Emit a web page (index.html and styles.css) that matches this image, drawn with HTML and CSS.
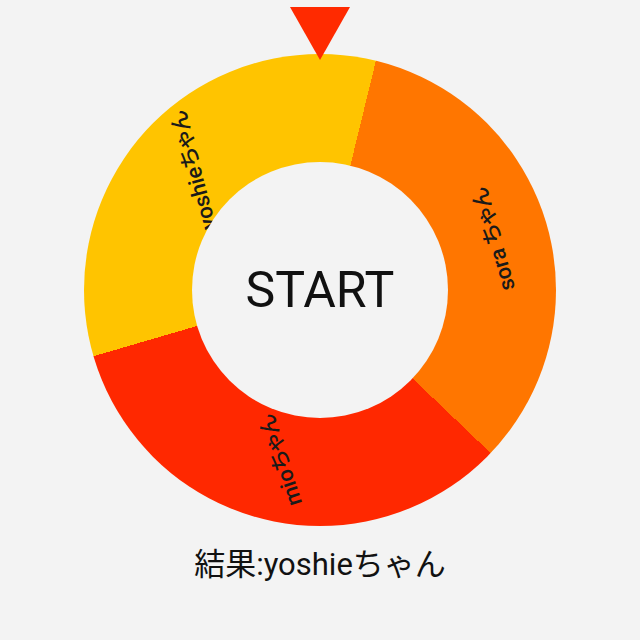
FILE: index.html
```html
<!DOCTYPE html>
<html lang="ja">
<head>
<meta charset="utf-8">
<title>Roulette</title>
<link rel="stylesheet" href="styles.css">
</head>
<body>
<main class="app">
  <div class="stage">
    <div class="pointer"></div>
    <div class="wheel">
      <span class="label label-yoshie">yoshieちゃん</span>
      <span class="label label-sora">sora ちゃん</span>
      <span class="label label-mio">mioちゃん</span>
      <button class="start" type="button">START</button>
    </div>
  </div>
  <p class="result">結果:yoshieちゃん</p>
</main>
</body>
</html>
```
FILE: styles.css
```css
html, body {
  margin: 0;
  padding: 0;
  background: #f3f3f3;
}

.app {
  width: 640px;
  height: 640px;
  display: flex;
  flex-direction: column;
  align-items: center;
  font-family: Roboto, "Noto Sans CJK JP", sans-serif;
  color: #111;
}

.stage {
  position: relative;
  width: 472px;
  height: 472px;
  margin-top: 54px;
}

.pointer {
  position: absolute;
  top: -47px;
  left: 206px;
  width: 0;
  height: 0;
  border-left: 30px solid transparent;
  border-right: 30px solid transparent;
  border-top: 53px solid #ff2a00;
  z-index: 3;
}

.wheel {
  position: relative;
  width: 472px;
  height: 472px;
  border-radius: 50%;
  background: conic-gradient(from 13.7deg,
    #ff7600 0deg 120deg,
    #ff2800 120deg 240deg,
    #ffc400 240deg 360deg);
  display: flex;
  align-items: center;
  justify-content: center;
}

.label {
  position: absolute;
  font-size: 22px;
  font-weight: 500;
  white-space: nowrap;
  color: #1a1a1a;
  font-feature-settings: "palt";
  transform: translate(-50%, -50%) rotate(var(--rot));
}

.label-yoshie {
  left: 107px;
  top: 117px;
  --rot: -105deg;
}

.label-sora {
  left: 407px;
  top: 186px;
  --rot: -106deg;
}

.label-mio {
  left: 194px;
  top: 407px;
  --rot: -108deg;
}

.start {
  position: relative;
  z-index: 2;
  width: 256px;
  height: 256px;
  border: none;
  border-radius: 50%;
  background: #f3f3f3;
  font-family: Roboto, "Noto Sans CJK JP", sans-serif;
  font-size: 50px;
  color: #111;
  padding: 0;
  cursor: pointer;
}

.result {
  margin: 21px 0 0;
  font-size: 31px;
  line-height: 36px;
  color: #111;
}
```
